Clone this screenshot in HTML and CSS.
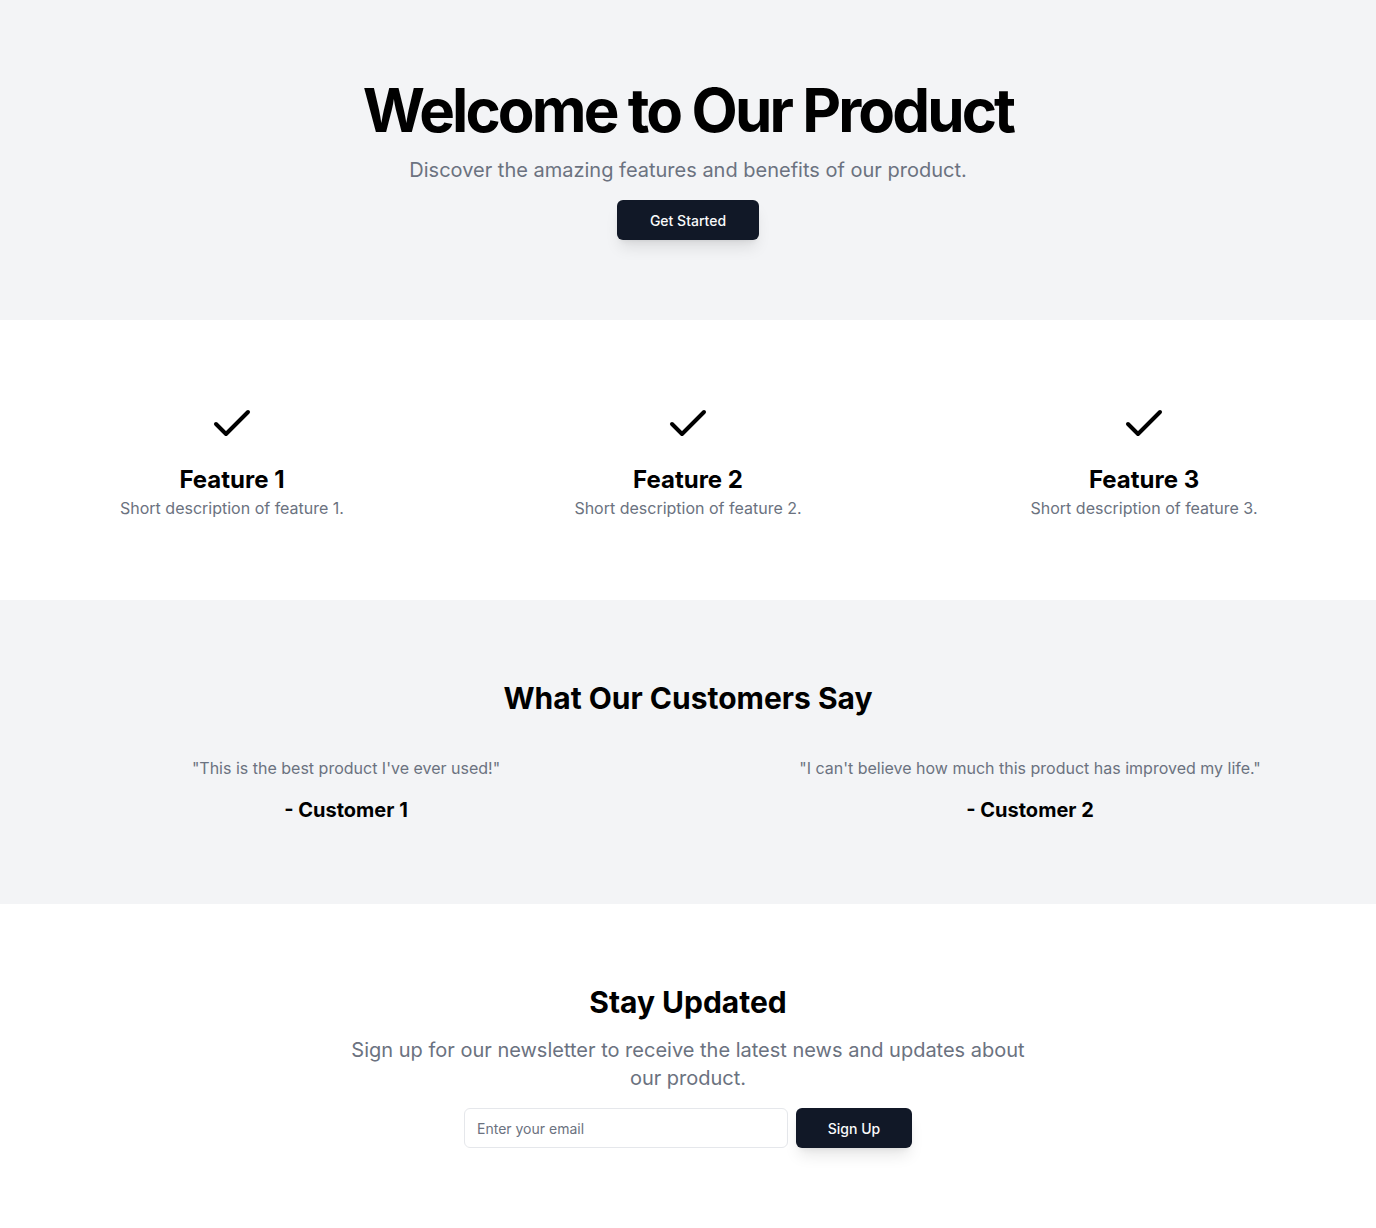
FILE: index.html
```html
<!DOCTYPE html>
<html lang="en">
<head>
<meta charset="utf-8">
<title>Welcome to Our Product</title>
<link rel="stylesheet" href="styles.css">
</head>
<body>
<main>
  <section class="hero">
    <h1 class="hero-title">Welcome to Our Product</h1>
    <p class="hero-sub">Discover the amazing features and benefits of our product.</p>
    <a class="btn btn-start" href="#">Get Started</a>
  </section>

  <section class="features">
    <div class="feature">
      <svg class="check" viewBox="0 0 24 24" fill="none" stroke="currentColor" stroke-width="2" stroke-linecap="round" stroke-linejoin="round"><path d="M20 6 9 17l-5-5"/></svg>
      <h3 class="feature-title">Feature 1</h3>
      <p class="feature-desc">Short description of feature 1.</p>
    </div>
    <div class="feature">
      <svg class="check" viewBox="0 0 24 24" fill="none" stroke="currentColor" stroke-width="2" stroke-linecap="round" stroke-linejoin="round"><path d="M20 6 9 17l-5-5"/></svg>
      <h3 class="feature-title">Feature 2</h3>
      <p class="feature-desc">Short description of feature 2.</p>
    </div>
    <div class="feature">
      <svg class="check" viewBox="0 0 24 24" fill="none" stroke="currentColor" stroke-width="2" stroke-linecap="round" stroke-linejoin="round"><path d="M20 6 9 17l-5-5"/></svg>
      <h3 class="feature-title">Feature 3</h3>
      <p class="feature-desc">Short description of feature 3.</p>
    </div>
  </section>

  <section class="testimonials">
    <h2 class="section-title">What Our Customers Say</h2>
    <div class="quotes">
      <div class="quote">
        <p class="quote-text">"This is the best product I've ever used!"</p>
        <p class="quote-author">- Customer 1</p>
      </div>
      <div class="quote">
        <p class="quote-text">"I can't believe how much this product has improved my life."</p>
        <p class="quote-author">- Customer 2</p>
      </div>
    </div>
  </section>

  <section class="newsletter">
    <h2 class="section-title">Stay Updated</h2>
    <p class="news-sub">Sign up for our newsletter to receive the latest news and updates about our product.</p>
    <form class="news-form">
      <input class="email" type="email" placeholder="Enter your email">
      <button class="btn btn-sign" type="submit">Sign Up</button>
    </form>
  </section>
</main>
</body>
</html>
```

FILE: styles.css
```css
* { box-sizing: border-box; }
html, body { margin: 0; padding: 0; }
body {
  font-family: Inter, "Noto Sans", sans-serif;
  color: #000;
  background: #fff;
}
h1, h2, h3, p { margin: 0; }

.hero {
  background: #f3f4f6;
  padding: 80px 24px;
  display: flex;
  flex-direction: column;
  align-items: center;
  gap: 16px;
  text-align: center;
}
.hero-title {
  font-size: 60px;
  line-height: 60px;
  font-weight: 700;
  letter-spacing: -0.048em;
}
.hero-sub {
  font-size: 20px;
  line-height: 28px;
  color: #6b7280;
}
.btn {
  display: inline-flex;
  align-items: center;
  justify-content: center;
  height: 40px;
  padding: 0 32px;
  background: #111827;
  color: #f9fafb;
  border: none;
  border-radius: 6px;
  font-family: Inter, sans-serif;
  font-size: 14px;
  font-weight: 500;
  text-decoration: none;
  box-shadow: 0 10px 15px -3px rgba(0,0,0,0.1), 0 4px 6px -4px rgba(0,0,0,0.1);
}
.btn-start { width: 142px; padding: 0; }

.features {
  padding: 80px 24px;
  display: grid;
  grid-template-columns: repeat(3, 1fr);
  gap: 40px;
  background: #fff;
}
.feature {
  display: flex;
  flex-direction: column;
  align-items: center;
  text-align: center;
}
.check {
  width: 48px;
  height: 48px;
  margin-bottom: 16px;
}
.feature-title {
  font-size: 24px;
  line-height: 32px;
  font-weight: 700;
}
.feature-desc {
  font-size: 16px;
  line-height: 24px;
  color: #6b7280;
}

.testimonials {
  background: #f3f4f6;
  padding: 80px 24px;
  text-align: center;
}
.section-title {
  font-size: 30px;
  line-height: 36px;
  font-weight: 700;
}
.quotes {
  margin-top: 40px;
  display: grid;
  grid-template-columns: repeat(2, 1fr);
  gap: 40px;
}
.quote {
  display: flex;
  flex-direction: column;
  gap: 16px;
}
.quote-text {
  font-size: 16px;
  line-height: 24px;
  color: #6b7280;
}
.quote-author {
  font-size: 20px;
  line-height: 28px;
  font-weight: 700;
}

.newsletter {
  padding: 80px 24px;
  display: flex;
  flex-direction: column;
  align-items: center;
  gap: 16px;
  text-align: center;
}
.news-sub {
  max-width: 700px;
  font-size: 20px;
  line-height: 28px;
  color: #6b7280;
}
.news-form {
  width: 448px;
  display: flex;
  gap: 8px;
}
.email {
  flex: 1;
  min-width: 0;
  height: 40px;
  padding: 8px 12px;
  border: 1px solid #e5e7eb;
  border-radius: 6px;
  background: #fff;
  font-family: Inter, sans-serif;
  font-size: 14px;
  color: #111827;
}
.email::placeholder { color: #6b7280; }
.btn-sign { flex: none; width: 116px; padding: 0 16px; }
```
